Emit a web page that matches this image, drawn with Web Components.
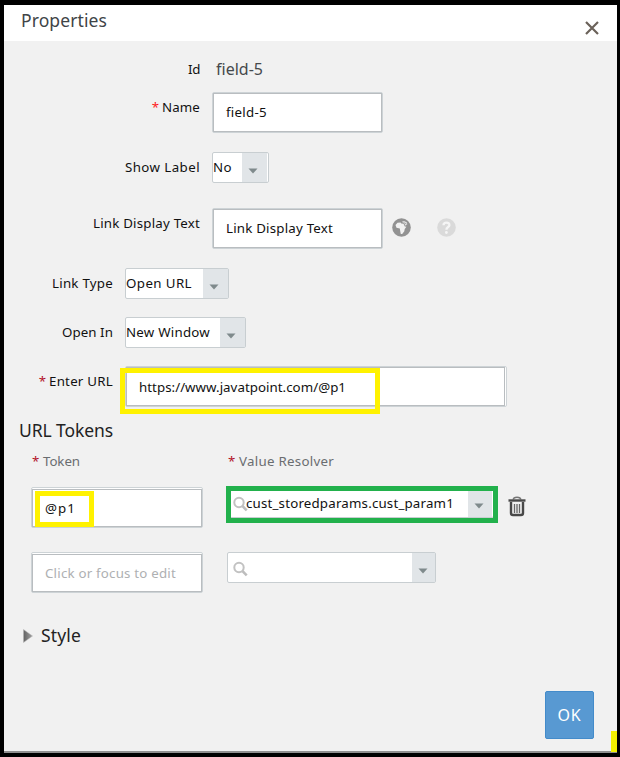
<!DOCTYPE html>
<html lang="en">
<head>
<meta charset="utf-8">
<title>Properties</title>
<style>
  html, body { margin: 0; height: 757px; background: #000; overflow: hidden; }
  body { font-family: "Noto Sans", Roboto, sans-serif; font-size: 13.3px; line-height: 20px; color: #111; }
</style>
</head>
<body>
<props-dialog>
  <fit-text slot="title" w="86" size="17.5" color="#404447">Properties</fit-text>

  <form-row top="18" labelw="196" gap="16">
    <fit-text slot="label" w="12">Id</fit-text>
    <fit-text w="47" size="16" color="#45494c">field-5</fit-text>
  </form-row>
  <form-row top="13" labelw="196" gap="12" h="41" required="#ff1a1a">
    <fit-text slot="label" w="38">Name</fit-text>
    <text-box w="171"><fit-text w="41">field-5</fit-text></text-box>
  </form-row>
  <form-row top="19" labelw="196" gap="12" h="31">
    <fit-text slot="label" w="75">Show Label</fit-text>
    <select-box w="57" btn="25" edge><fit-text w="19">No</fit-text></select-box>
  </form-row>
  <form-row top="25" labelw="196" gap="12" h="41">
    <fit-text slot="label" w="107">Link Display Text</fit-text>
    <text-box w="171"><fit-text w="107">Link Display Text</fit-text></text-box>
    <icon-globe></icon-globe>
    <icon-help></icon-help>
  </form-row>
  <form-row top="19" labelw="109" gap="12" h="31">
    <fit-text slot="label" w="61">Link Type</fit-text>
    <select-box w="104" btn="25"><fit-text w="66">Open URL</fit-text></select-box>
  </form-row>
  <form-row top="18" labelw="109" gap="12" h="31">
    <fit-text slot="label" w="51">Open In</fit-text>
    <select-box w="121" btn="25"><fit-text w="84">New Window</fit-text></select-box>
  </form-row>
  <form-row top="18" labelw="109" gap="12" h="41" required="#b3122a">
    <fit-text slot="label" w="64">Enter URL</fit-text>
    <mark-area x="-5" y="2" w="260" h="46" color="#fff200">
      <text-box w="382" wide><fit-text w="207">https://www.javatpoint.com/@p1</fit-text></text-box>
    </mark-area>
  </form-row>

  <section-title top="13" left="15"><fit-text w="94" size="17.5" color="#222">URL Tokens</fit-text></section-title>

  <token-row top="11" h="20" first="28" second="224">
    <req-label slot="a"><fit-text w="37" color="#6a6d70">Token</fit-text></req-label>
    <req-label slot="b"><fit-text w="95" color="#6a6d70">Value Resolver</fit-text></req-label>
  </token-row>
  <token-row top="16" h="41" first="27" second="223">
    <mark-area slot="a" x="4" y="4" w="59" h="36" color="#fff200">
      <text-box w="172" ring><fit-text w="31">@p1</fit-text></text-box>
    </mark-area>
    <mark-area slot="b" x="-1" y="-1" w="272" h="37" color="#22b14c">
      <select-box w="267" btn="24" search edge><fit-text w="208">cust_storedparams.cust_param1</fit-text></select-box>
    </mark-area>
    <icon-trash slot="b"></icon-trash>
  </token-row>
  <token-row top="24" h="41" first="27" second="223">
    <text-box slot="a" w="172" ring><fit-text w="131" color="#aeb0b2">Click or focus to edit</fit-text></text-box>
    <select-box slot="b" w="209" btn="23" search></select-box>
  </token-row>

  <section-title top="32" left="19" arrow><fit-text w="40" size="17.5" color="#222">Style</fit-text></section-title>

  <ok-button slot="footer"><fit-text w="24" size="16" color="#fff">OK</fit-text></ok-button>
</props-dialog>

<script>
const num = (el, name, fallback = 0) => Number(el.getAttribute(name) ?? fallback);

class Base extends HTMLElement {
  connectedCallback() {
    if (this.shadowRoot) return;
    this.attachShadow({ mode: 'open' }).innerHTML = this.render();
    this.ready?.();
  }
}

/* Single line of text, tracked out to a given advance width. */
customElements.define('fit-text', class extends Base {
  render() {
    return `<style>
      :host { display: block; flex: none; width: ${num(this, 'w')}px; height: 20px; white-space: nowrap;
        color: ${this.getAttribute('color') || '#111'}; font-size: ${num(this, 'size', 13.3)}px; line-height: 20px; }
      span { display: inline-block; }
    </style><span><slot></slot></span>`;
  }
  ready() {
    const span = this.shadowRoot.querySelector('span');
    const n = this.textContent.length;
    const extra = (num(this, 'w') - span.getBoundingClientRect().width) / n;
    span.style.letterSpacing = extra.toFixed(3) + 'px';
  }
});

customElements.define('props-dialog', class extends Base {
  render() {
    return `<style>
      :host { display: flex; flex-direction: column; box-sizing: border-box; position: relative;
        width: 613px; height: 748px; margin: 5px 0 0 4px; background: #f1f1f1; border-bottom: 2px solid #8f8f8f; }
      header { display: flex; justify-content: space-between; height: 36px; background: #fff; padding: 5px 18px 0 17px; box-sizing: border-box; flex: none; }
      header svg { margin-top: 11px; width: 14px; height: 14px; }
      main { flex: 1; }
      footer { display: flex; justify-content: flex-end; padding: 0 23px 12px 0; }
      i { position: absolute; right: 0; bottom: -1px; width: 6px; height: 21px; background: #f3f000; }
    </style>
    <header><slot name="title"></slot>
      <svg viewBox="0 0 14 14"><path d="M1 1L13 13M13 1L1 13" stroke="#6b625a" stroke-width="2.2" fill="none"/></svg>
    </header>
    <main><slot></slot></main>
    <footer><slot name="footer"></slot></footer><i></i>`;
  }
});

customElements.define('form-row', class extends Base {
  render() {
    const h = num(this, 'h', 20), req = this.getAttribute('required');
    return `<style>
      :host { display: flex; align-items: flex-start; height: ${h}px; padding-top: ${num(this, 'top')}px; }
      .label { display: flex; justify-content: flex-end; gap: 3px; flex: none; width: ${num(this, 'labelw')}px;
        padding-top: ${h > 20 ? 5 : 0}px; margin-right: ${num(this, 'gap')}px; }
      b { font-weight: 400; color: ${req}; }
    </style><div class="label">${req ? '<b>*</b>' : ''}<slot name="label"></slot></div><slot></slot>`;
  }
});

customElements.define('token-row', class extends Base {
  render() {
    return `<style>
      :host { display: grid; grid-template-columns: ${num(this, 'second') - num(this, 'first')}px auto; justify-content: start;
        height: ${num(this, 'h')}px; padding: ${num(this, 'top')}px 0 0 ${num(this, 'first')}px; }
      div { display: flex; align-items: flex-start; }
    </style><div><slot name="a"></slot></div><div><slot name="b"></slot></div>`;
  }
});

customElements.define('req-label', class extends Base {
  render() {
    return `<style>:host { display: flex; } b { width: 11px; font-weight: 400; color: #b3122a; }</style><b>*</b><slot></slot>`;
  }
});

customElements.define('section-title', class extends Base {
  render() {
    return `<style>
      :host { display: flex; height: 20px; padding: ${num(this, 'top')}px 0 0 ${num(this, 'left')}px; }
      svg { width: 10px; height: 14px; margin: 4px 8px 0 0; }
    </style>${this.hasAttribute('arrow') ? `<svg viewBox="0 0 10 14"><defs><linearGradient id="g" x2="1" y2="0"><stop stop-color="#626262"/><stop offset="1" stop-color="#a2a2a2"/></linearGradient></defs><path d="M.5 .5L9.5 7L.5 13.5Z" fill="url(#g)" stroke="#b5b5b5" stroke-width=".5"/></svg>` : ''}<slot></slot>`;
  }
});

customElements.define('text-box', class extends Base {
  render() {
    const ring = this.hasAttribute('ring'), wide = this.hasAttribute('wide');
    return `<style>
      :host { display: block; flex: none; box-sizing: border-box; width: ${num(this, 'w')}px; height: 41px;
        border: 1px solid #cdd3d6; border-radius: 2px; background: #fff; padding: ${ring ? '1px 0 0' : wide ? '0 1px 0 0' : '0'}; }
      div { box-sizing: border-box; height: 100%; border: 1px solid #b9bdc0; padding: ${ring ? 8 : wide ? 9 : 8}px 0 0 12px; }
    </style><div><slot></slot></div>`;
  }
});

customElements.define('select-box', class extends Base {
  render() {
    const edge = this.hasAttribute('edge'), search = this.hasAttribute('search');
    return `<style>
      :host { display: flex; flex: none; box-sizing: border-box; width: ${num(this, 'w')}px; height: 31px;
        border: 1px solid #c8ced1; border-radius: 2px; background: #fff; }
      .val { flex: 1; display: flex; padding-top: ${search ? 5 : 4}px; min-width: 0; }
      .glass { width: 15px; height: 16px; margin: ${search ? 3 : 0}px -2px 0 5px; flex: none; }
      .btn { width: ${num(this, 'btn')}px; background: #e1e5e8; margin-right: ${edge ? 1 : 0}px; flex: none; }
      .btn svg { display: block; width: 10px; height: 6px; margin: 15px 0 0 6px; }
    </style>
    <div class="val">${search ? `<svg class="glass" viewBox="0 0 15 16"><circle cx="6" cy="6.5" r="4.7" fill="none" stroke="#c2c2c2" stroke-width="2"/><path d="M9.5 10.2L13.7 14.4" stroke="#bdbdbd" stroke-width="2.6"/></svg>` : ''}<slot></slot></div>
    <div class="btn"><svg viewBox="0 0 10 6"><path d="M.5 .5H9.5L5 5.5Z" fill="#7f8a8c"/></svg></div>`;
  }
});

/* Highlights part of the wrapped control with a thick frame. */
customElements.define('mark-area', class extends Base {
  render() {
    return `<style>
      :host { display: block; position: relative; flex: none; }
      i { position: absolute; box-sizing: border-box; pointer-events: none; left: ${num(this, 'x')}px; top: ${num(this, 'y')}px;
        width: ${num(this, 'w')}px; height: ${num(this, 'h')}px; border: 5px solid ${this.getAttribute('color')}; }
    </style><slot></slot><i></i>`;
  }
});

customElements.define('icon-globe', class extends Base {
  render() {
    return `<style>:host { display: block; margin: 10px 0 0 9px; } svg { display: block; width: 19px; height: 19px; }</style>
    <svg viewBox="0 0 19 19"><circle cx="9.5" cy="9.5" r="9.3" fill="#929292"/>
    <path d="M3.5 7L5.5 4.8L8.6 4.4L9.3 5.5L11.5 5.7L12.8 8.4L14.4 8.8L12.7 11L12.3 13.2L10.2 16H8.8L8.3 13.5L7.8 10.5L4.5 9.7Z" fill="#f1f1f1"/>
    <path d="M9.8 3.8L12 3L14.8 4.2L15.3 6.3L13.5 7.7L12.3 5.5Z" fill="#dedede"/><path d="M11.5 4.5L14.5 6" stroke="#999" stroke-width=".7"/></svg>`;
  }
});

customElements.define('icon-help', class extends Base {
  render() {
    return `<style>:host { display: block; margin: 10px 0 0 26px; } svg { display: block; width: 19px; height: 19px; }</style>
    <svg viewBox="0 0 19 19"><circle cx="9.5" cy="9.5" r="9.3" fill="#dadada"/>
    <path d="M6.5 7.2C6.6 3.8 12.6 3.8 12.4 7.1C12.3 9.1 9.4 8.9 9.4 11.7" fill="none" stroke="#f5f5f5" stroke-width="2.3"/><circle cx="9.4" cy="14.5" r="1.4" fill="#f5f5f5"/></svg>`;
  }
});

customElements.define('icon-trash', class extends Base {
  render() {
    return `<style>:host { display: block; margin: 9px 0 0 14px; } svg { display: block; width: 18px; height: 21px; }</style>
    <svg viewBox="0 0 18 21"><path d="M5.2 3.5C5.5 .5 12.5 .5 12.8 3.5" fill="none" stroke="#777" stroke-width="1.5"/>
    <path d="M.5 4.5H17.5" stroke="#484848" stroke-width="2.4"/>
    <path d="M3 6V17Q3 19 5 19H13Q15 19 15 17V6" fill="none" stroke="#484848" stroke-width="2.4"/>
    <path d="M6.5 8V17M9 8V17M11.5 8V17" stroke="#666" stroke-width="1.3"/></svg>`;
  }
});

customElements.define('ok-button', class extends Base {
  render() {
    return `<style>
      :host { display: flex; align-items: center; justify-content: center; box-sizing: border-box; width: 49px; height: 48px;
        background: #5899d2; border: 1px solid #438bca; border-radius: 2px; }
    </style><slot></slot>`;
  }
});
</script>
</body>
</html>
